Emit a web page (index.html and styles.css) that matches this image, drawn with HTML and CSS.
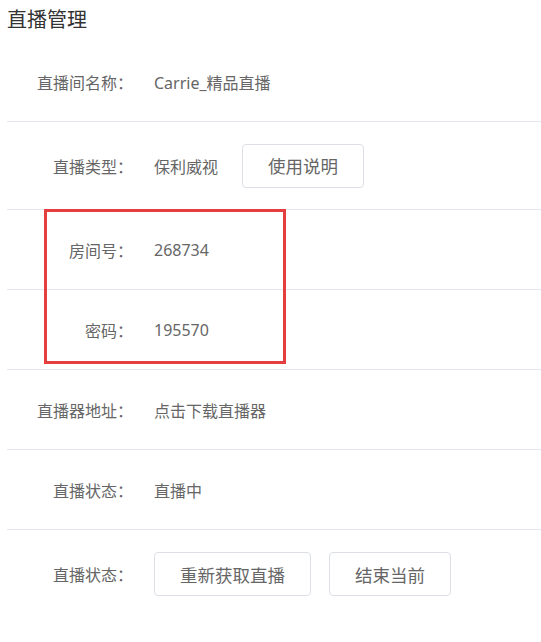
FILE: index.html
```html
<!DOCTYPE html>
<html lang="zh-CN">
<head>
<meta charset="utf-8">
<title>直播管理</title>
<link rel="stylesheet" href="styles.css">
</head>
<body>
<div class="page">
  <h1 class="title">直播管理</h1>
  <div class="list">
    <div class="row">
      <div class="label">直播间名称：</div>
      <div class="value">Carrie_精品直播</div>
    </div>
    <div class="row row-tall">
      <div class="label">直播类型：</div>
      <div class="value">保利威视</div>
      <button class="btn btn-help">使用说明</button>
    </div>
    <div class="row">
      <div class="label">房间号：</div>
      <div class="value">268734</div>
    </div>
    <div class="row">
      <div class="label">密码：</div>
      <div class="value">195570</div>
    </div>
    <div class="row">
      <div class="label">直播器地址：</div>
      <div class="value">点击下载直播器</div>
    </div>
    <div class="row">
      <div class="label">直播状态：</div>
      <div class="value">直播中</div>
    </div>
    <div class="row row-tall row-last">
      <div class="label">直播状态：</div>
      <div class="actions">
        <button class="btn">重新获取直播</button>
        <button class="btn">结束当前</button>
      </div>
    </div>
    <div class="highlight"></div>
  </div>
</div>
</body>
</html>
```

FILE: styles.css
```css
* { box-sizing: border-box; }
html, body {
  margin: 0;
  padding: 0;
  background: #fff;
}
body {
  font-family: "Noto Sans", "Noto Sans CJK SC", sans-serif;
  color: #666;
  overflow: hidden;
}
.page {
  padding-left: 7px;
  width: 560px;
}
.title {
  margin: 0;
  height: 42px;
  padding-top: 5px;
  font-size: 20px;
  font-weight: normal;
  line-height: 30px;
  color: #333;
}
.list {
  position: relative;
}
.row {
  display: flex;
  align-items: center;
  height: 80px;
  border-bottom: 1px solid #e4e7ed;
  font-size: 16px;
}
.row-tall { height: 88px; }
.row-last { border-bottom: none; }
.label {
  width: 126px;
  text-align: right;
  color: #666;
  white-space: nowrap;
}
.value {
  margin-left: 21px;
  color: #666;
}
.actions {
  margin-left: 21px;
  display: flex;
  gap: 18px;
}
.btn {
  height: 44px;
  padding: 0 25px;
  border: 1px solid #dcdfe6;
  border-radius: 4px;
  background: #fff;
  font-family: inherit;
  font-size: 17.5px;
  color: #666;
}
.btn-help {
  margin-left: 24px;
}
.highlight {
  position: absolute;
  left: 37px;
  top: 167px;
  width: 242px;
  height: 155px;
  border: 3px solid #e53e3e;
  pointer-events: none;
}
```
